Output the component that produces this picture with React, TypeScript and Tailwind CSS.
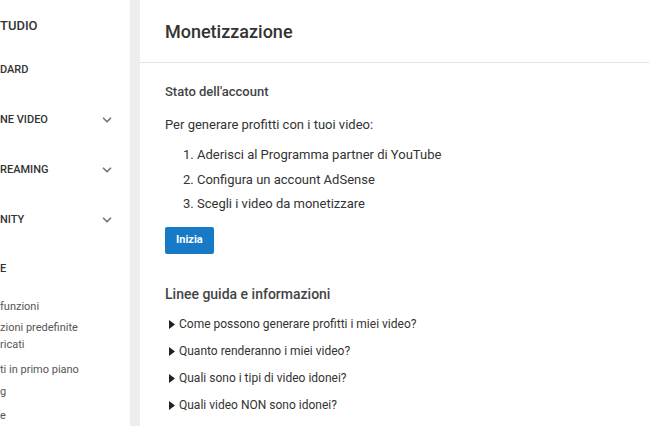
import { ChevronDown } from "lucide-react";

const navTop = [
  { label: "DARD", chevron: false },
  { label: "NE VIDEO", chevron: true },
  { label: "REAMING", chevron: true },
  { label: "NITY", chevron: true },
];

const guides = [
  "Come possono generare profitti i miei video?",
  "Quanto renderanno i miei video?",
  "Quali sono i tipi di video idonei?",
  "Quali video NON sono idonei?",
];

export default function App() {
  return (
    <div
      className="flex h-[426px] w-[649px] overflow-hidden bg-white text-[#333]"
      style={{ fontFamily: "Roboto, 'Liberation Sans', sans-serif" }}
    >
      <aside className="flex w-[130px] shrink-0 flex-col bg-white">
        <div className="h-[45px] pt-[17px] text-[13px] font-medium leading-[18px] text-[#333]">TUDIO</div>
        {navTop.map((n) => (
          <div key={n.label} className="flex h-[50px] items-center justify-between pr-[16px]">
            <span className="text-[11px] font-medium text-[#333]">{n.label}</span>
            {n.chevron && <ChevronDown size={14} strokeWidth={3} className="text-[#777]" />}
          </div>
        ))}
        <div className="flex h-[48px] items-center text-[11px] font-medium text-[#333]">E</div>
        <div className="mt-[5px] flex flex-col text-[11px] leading-[17px] text-[#555]">
          <div className="h-[21px]">funzioni</div>
          <div>zioni predefinite</div>
          <div className="h-[25px]">ricati</div>
          <div className="h-[22px]">ti in primo piano</div>
          <div className="h-[24px]">g</div>
          <div>e</div>
        </div>
      </aside>
      <div className="w-[10px] shrink-0 bg-[#eeeeee]" />
      <main className="flex min-w-0 flex-1 flex-col">
        <header className="flex h-[63px] items-center border-b border-[#e2e2e2] pl-[25px]">
          <h1 className="text-[18px] font-medium text-[#333]">Monetizzazione</h1>
        </header>
        <section className="pl-[25px] pt-[20px]">
          <h2 className="text-[13px] font-medium leading-[17px] text-[#444]">Stato dell'account</h2>
          <p className="mt-[16px] text-[13px] leading-[17px] text-[#333]">Per generare profitti con i tuoi video:</p>
          <ol className="mt-[13px] flex flex-col gap-[7.5px] pl-[18px] text-[13px] leading-[17px] text-[#333]">
            <li>1. Aderisci al Programma partner di YouTube</li>
            <li>2. Configura un account AdSense</li>
            <li>3. Scegli i video da monetizzare</li>
          </ol>
          <button className="mt-[15px] h-[27px] rounded-[2px] bg-[#167ac6] px-[11px] text-[11px] font-bold text-white">
            Inizia
          </button>
          <h2 className="mt-[31px] text-[14px] font-medium leading-[18px] text-[#444]">Linee guida e informazioni</h2>
          <ul className="mt-[13px] flex flex-col gap-[10px] pl-[4px] text-[12px] leading-[17px] text-[#333]">
            {guides.map((g) => (
              <li key={g} className="flex items-center gap-[4px]">
                <svg width="6" height="9" viewBox="0 0 6 9" className="shrink-0">
                  <path d="M0 0 L6 4.5 L0 9 Z" fill="#222" />
                </svg>
                <span>{g}</span>
              </li>
            ))}
          </ul>
        </section>
      </main>
    </div>
  );
}
